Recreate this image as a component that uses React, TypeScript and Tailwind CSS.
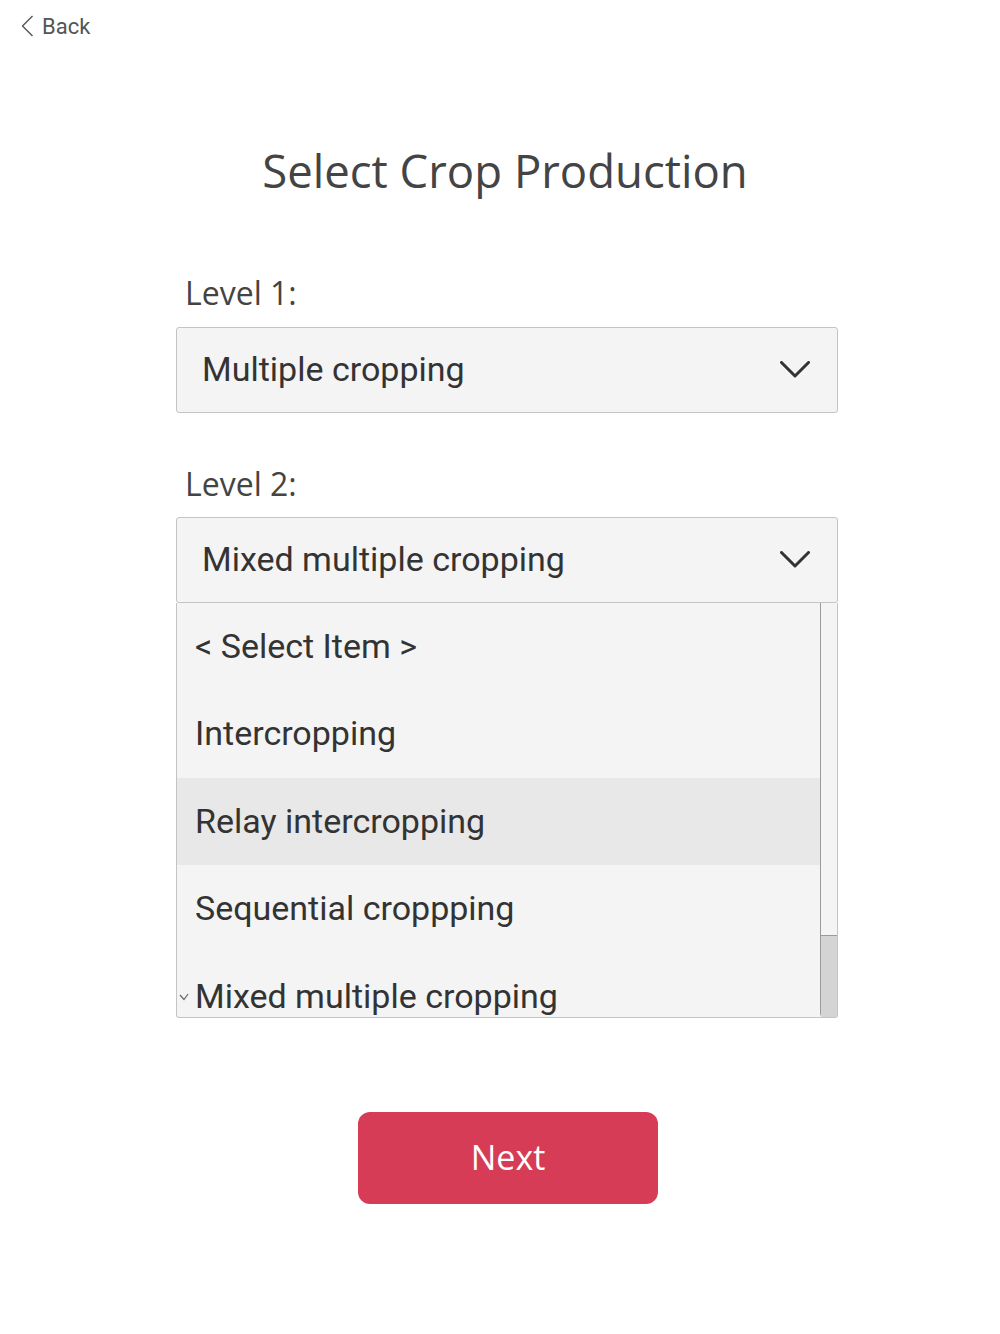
const items = [
    { label: '< Select Item >', active: false, checked: false },
    { label: 'Intercropping', active: false, checked: false },
    { label: 'Relay intercropping', active: true, checked: false },
    { label: 'Sequential croppping', active: false, checked: false },
    { label: 'Mixed multiple cropping', active: false, checked: true },
];

function SelectBox({ value }: { value: string }) {
    return (
        <div className="h-[86px] bg-[#f4f4f4] border border-[#c4c4c4] rounded-[3px] flex items-center justify-between pl-[25px] pr-[27px]">
            <span className="font-['Roboto'] text-[34px] text-[#333]">{value}</span>
            <svg width="30" height="17" viewBox="0 0 30 17" className="text-[#333]">
                <polyline points="1.5,1.5 15,15 28.5,1.5" fill="none" stroke="currentColor" strokeWidth="3" strokeLinecap="round" strokeLinejoin="round" />
            </svg>
        </div>
    );
}

export default function App() {
    return (
        <div className="bg-white min-h-[1334px] w-[1000px] font-['Open_Sans',sans-serif]">
            {/* Back */}
            <div className="flex items-center pt-[12px] pl-[21px] h-[40px] text-[#555]">
                <svg width="13" height="22" viewBox="0 0 13 22" className="mr-[8px]">
                    <polyline points="11.5,1 1.5,11 11.5,21" fill="none" stroke="currentColor" strokeWidth="1.4" strokeLinejoin="round" />
                </svg>
                <span className="font-['Roboto'] text-[22px]">Back</span>
            </div>

            <h1 className="text-center text-[45.5px] text-[#444] mt-[108px] leading-none pl-[10px]">Select Crop Production</h1>

            <div className="w-[662px] ml-[176px] mt-[83px]">
                <div className="text-[32px] text-[#444] pl-[9px] leading-none mb-[18px]">Level 1:</div>
                <SelectBox value="Multiple cropping" />

                <div className="text-[32px] text-[#444] pl-[9px] leading-none mt-[55px] mb-[17px]">Level 2:</div>
                <SelectBox value="Mixed multiple cropping" />

                {/* Open list */}
                <div className="h-[415px] bg-[#f4f4f4] border border-[#c4c4c4] border-t-0 rounded-b-[3px] flex overflow-hidden">
                    <div className="flex-1 overflow-hidden">
                        {items.map((it) => (
                            <div
                                key={it.label}
                                className={`h-[87.5px] shrink-0 flex items-center relative pl-[18px] font-['Roboto'] text-[34px] text-[#333] ${it.active ? 'bg-[#e8e8e8]' : ''}`}
                            >
                                {it.checked && (
                                    <svg width="10" height="8" viewBox="0 0 10 8" className="absolute left-[2px] top-[40px] text-[#666]">
                                        <polyline points="1,2 5,6.5 9,1" fill="none" stroke="currentColor" strokeWidth="1.2" />
                                    </svg>
                                )}
                                {it.label}
                            </div>
                        ))}
                    </div>
                    <div className="w-[17px] border-l border-[#9a9a9a] flex flex-col rounded-bl-[4px]">
                        <div className="flex-1 bg-[#f4f4f4]" />
                        <div className="h-[82px] bg-[#d4d4d4] border-t border-[#9a9a9a]" />
                    </div>
                </div>
            </div>

            <div className="mt-[94px] ml-[358px]">
                <button className="w-[300px] h-[92px] bg-[#d63c56] rounded-[12px] text-white text-[34px]">Next</button>
            </div>
        </div>
    );
}
